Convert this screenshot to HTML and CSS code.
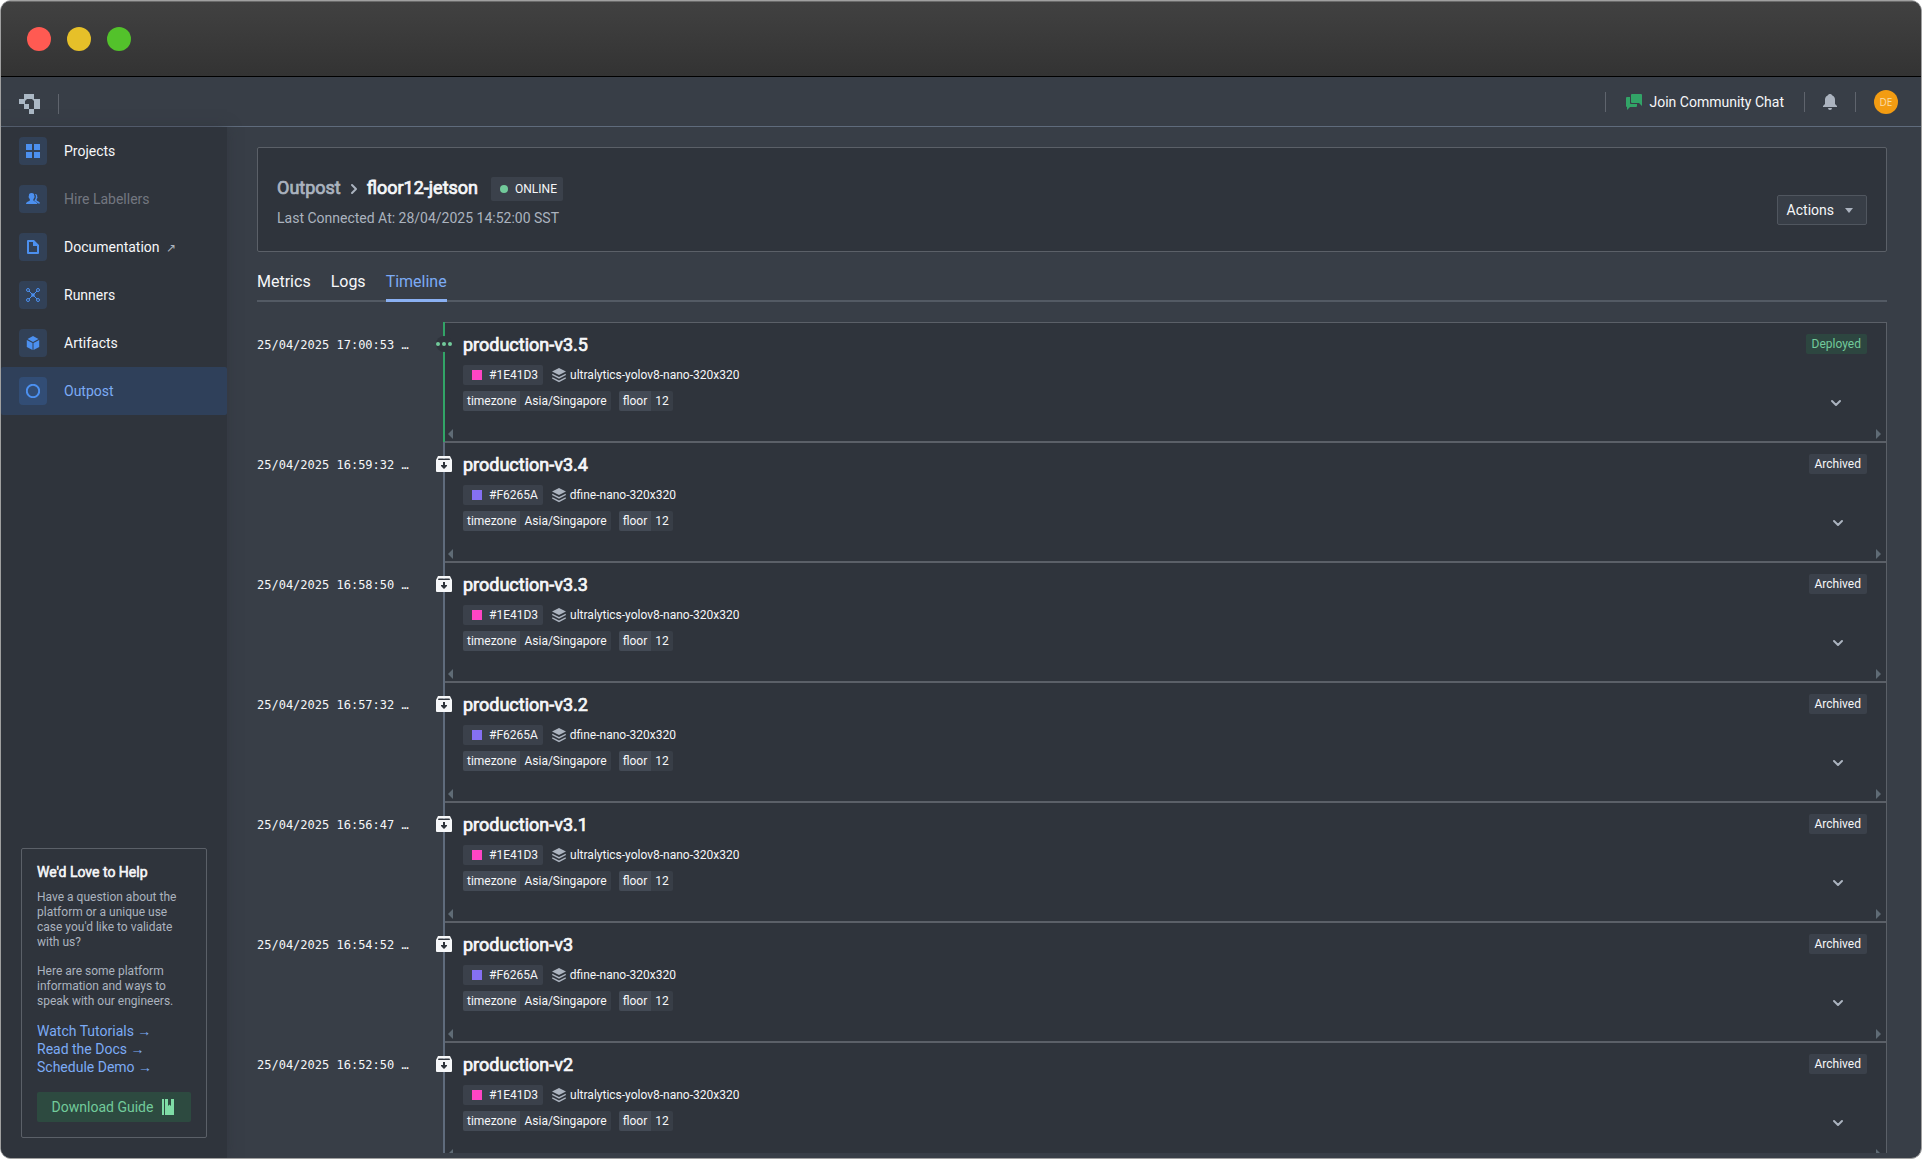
FILE: index.html
```html
<!DOCTYPE html>
<html lang="en">

   <head>
      <title>floor12-jetson | Outpost</title>
      <meta charset="utf-8">
      <meta name="viewport" content="width=device-width, initial-scale=1.0">
      <link rel="stylesheet" href="styles.css">
   </head>

   <body>
      <!-- shared icons -->
      <svg class="sprite" width="0" height="0" aria-hidden="true">
         <symbol id="archive" viewBox="0 0 16 16">
            <path fill="#2f343c" d="M1 3h14v12H1z" />
            <path fill="#f6f7f9" fill-rule="evenodd" d="M2 0h12l2 4v11a1 1 0 0 1-1 1H1a1 1 0 0 1-1-1V4zM2.500 2.500 2 4h12l-.5-1.500zM7 6v3H5v1l3 3 3-3V9H9V6z" />
         </symbol>
         <symbol id="running" viewBox="0 0 16 16">
            <circle cx="8" cy="8" r="8" fill="#2f343c" />
            <g fill="#72ca9b"><circle cx="2" cy="8" r="2" /><circle cx="8" cy="8" r="2" /><circle cx="14" cy="8" r="2" /></g>
         </symbol>
         <symbol id="layers" viewBox="0 0 16 16">
            <path fill="#abb3bf" d="M8 1 15 4.500 8 8 1 4.500zM1.500 6.800 8 10l6.500-3.200.5 1.300L8 11.700 1 8.100zM1.500 10.300 8 13.500l6.500-3.200.5 1.300L8 15.200 1 11.600z" />
         </symbol>
         <symbol id="chevron" viewBox="0 0 16 16">
            <path fill="none" stroke="#abb3bf" stroke-width="2" stroke-linecap="round" stroke-linejoin="round" d="m4 6 4 4 4-4" />
         </symbol>
      </svg>

      <div class="window">
         <div class="titlebar">
            <span class="dot red"></span><span class="dot yellow"></span><span class="dot green"></span>
         </div>

         <header class="topbar">
            <div class="brand">
               <a href="#" aria-label="Home">
                  <svg width="21" height="20" viewBox="0 0 21 20" fill="#abb8c5"><path d="M5 0h10v5h6v10h-6V7l-2-2H8L6 7v3h4v5H5v-5H0V5h5zM10 15h5v5h-5z" /></svg>
               </a>
               <span class="divider"></span>
            </div>
            <div class="topbar-right">
               <span class="divider"></span>
               <a class="chat" href="#">
                  <svg width="16" height="16" viewBox="0 0 16 16" fill="#32a467"><path d="M6 0h9a1 1 0 0 1 1 1v11l-3-3H6a1 1 0 0 1-1-1V1a1 1 0 0 1 1-1z" /><path d="M1 3h3v6a1 1 0 0 0 1 1h6v2a1 1 0 0 1-1 1H4l-3 3v-3a1 1 0 0 1-1-1V4a1 1 0 0 1 1-1z" /></svg>
                  Join Community Chat
               </a>
               <span class="divider"></span>
               <button class="bell" aria-label="Notifications">
                  <svg width="14" height="16" viewBox="1 0 14 16" fill="#abb3bf"><path d="M8 0a2 2 0 0 1 2 1.300A5 5 0 0 1 13 6v4l2 2v1H1v-1l2-2V6a5 5 0 0 1 3-4.700A2 2 0 0 1 8 0zM6 14h4a2 2 0 0 1-4 0z" /></svg>
               </button>
               <span class="divider"></span>
               <span class="avatar">DE</span>
            </div>
         </header>

         <div class="layout">
            <aside class="sidebar">
               <nav>
                  <a class="nav-item" href="#">
                     <span class="nav-icon"><svg width="14" height="14" viewBox="0 0 14 14"><path d="M0 0h6v6H0zM8 0h6v6H8zM0 8h6v6H0zM8 8h6v6H8z" /></svg></span>
                     Projects
                  </a>
                  <a class="nav-item disabled" href="#">
                     <span class="nav-icon"><svg width="14" height="14" viewBox="0 0 14 14"><path d="M8.800 2c1.800-.3 2.600.8 2.400 2.600l.3.900c-.1.800-.6 1-.9 1.900-.2 1 .4 1.400 1.400 1.800 1.300.5 1.900 1.100 2 2.300h-2.200c-.5-1.200-1.600-1.700-2.700-2.200-.6-.3-.9-.6-.5-1.200.7-.9 1-1.500 1.100-2.400.4-1.200.2-2.800-.9-3.700z" /><path d="M5.600 1c2 0 2.900 1.200 2.700 3 .5.600.4 1.500-.2 2-.2.700-.5 1.100-.8 1.500-.2 1 .3 1.400 1.300 1.800 1.600.6 2.400 1.200 2.600 2.700H0c.2-1.500 1-2.100 2.600-2.700 1-.4 1.500-.8 1.300-1.800-.3-.4-.6-.8-.8-1.500-.6-.5-.7-1.400-.2-2C2.700 2.200 3.600 1 5.600 1z" /></svg></span>
                     Hire Labellers
                  </a>
                  <a class="nav-item" href="#">
                     <span class="nav-icon"><svg width="14" height="14" viewBox="0 0 14 14"><path fill-rule="evenodd" d="M2 0h6l5 5v8a1 1 0 0 1-1 1H2a1 1 0 0 1-1-1V1a1 1 0 0 1 1-1zM3 2v10h8V6H7V2z" /></svg></span>
                     <span>Documentation <span class="external">↗</span></span>
                  </a>
                  <a class="nav-item" href="#">
                     <span class="nav-icon"><svg width="14" height="14" viewBox="0 0 14 14"><g class="stroke"><circle cx="2" cy="2" r="1.500" /><circle cx="12" cy="2" r="1.500" /><circle cx="2" cy="12" r="1.500" /><circle cx="12" cy="12" r="1.500" /><path d="m3 3 8 8M11 3l-8 8" /></g><circle cx="7" cy="7" r="1.800" /></svg></span>
                     Runners
                  </a>
                  <a class="nav-item" href="#">
                     <span class="nav-icon"><svg width="14" height="14" viewBox="0 0 14 14"><path d="m7 0 5.500 3L7 6 1.500 3zM.8 4l5.700 3v7L.8 11zM13.200 4 7.500 7v7l5.700-3z" /></svg></span>
                     Artifacts
                  </a>
                  <a class="nav-item active" href="#">
                     <span class="nav-icon"><svg width="14" height="14" viewBox="0 0 14 14"><circle class="stroke thick" cx="7" cy="7" r="6.200" /></svg></span>
                     Outpost
                  </a>
               </nav>

               <section class="help">
                  <h2>We'd Love to Help</h2>
                  <p>Have a question about the platform or a unique use case you'd like to validate with us?</p>
                  <p>Here are some platform information and ways to speak with our engineers.</p>
                  <a class="help-link" href="#">Watch Tutorials →</a>
                  <a class="help-link" href="#">Read the Docs →</a>
                  <a class="help-link" href="#">Schedule Demo →</a>
                  <button class="guide">
                     Download Guide
                     <svg width="16" height="16" viewBox="0 0 16 16" fill="#7fdca6"><path d="M2 0h2v16H2zM5 0h3v7l1.500-1.500L11 7V0h3v16H5z" /></svg>
                  </button>
               </section>
            </aside>

            <main class="content">
               <section class="device">
                  <div>
                     <div class="crumbs">
                        <a href="#">Outpost</a>
                        <svg width="16" height="16" viewBox="0 0 16 16"><path fill="none" stroke="#abb3bf" stroke-width="2" stroke-linecap="round" stroke-linejoin="round" d="m6 4 4 4-4 4" /></svg>
                        <h1>floor12-jetson</h1>
                        <span class="status">ONLINE</span>
                     </div>
                     <p class="last-seen">Last Connected At: 28/04/2025 14:52:00 SST</p>
                  </div>
                  <button class="actions">
                     Actions
                     <svg width="16" height="16" viewBox="0 0 16 16" fill="#abb3bf"><path d="M4 6h8l-4 5z" /></svg>
                  </button>
               </section>

               <nav class="tabs">
                  <a href="#">Metrics</a>
                  <a href="#">Logs</a>
                  <a class="active" href="#">Timeline</a>
               </nav>

               <ol class="timeline">
                  <li class="entry deployed">
                     <time>25/04/2025 17:00:53 …</time>
                     <div class="rail">
                        <svg class="marker" width="16" height="16"><use href="#running" /></svg>
                        <article class="card">
                           <div class="card-body">
                              <div>
                                 <h3>production-v3.5</h3>
                                 <div class="tags">
                                    <span class="tag hash"><i class="swatch pink"></i>#1E41D3</span>
                                    <span class="model"><svg width="16" height="16"><use href="#layers" /></svg>ultralytics-yolov8-nano-320x320</span>
                                 </div>
                                 <div class="tags labels">
                                    <span class="pair"><b>timezone</b><span>Asia/Singapore</span></span>
                                    <span class="pair"><b>floor</b><span>12</span></span>
                                 </div>
                              </div>
                              <div class="side">
                                 <span class="tag state">Deployed</span>
                                 <button class="expand" aria-label="Expand"><svg width="16" height="16"><use href="#chevron" /></svg></button>
                              </div>
                           </div>
                           <div class="scroller"><i class="left"></i><i class="right"></i></div>
                        </article>
                     </div>
                  </li>
                  <li class="entry">
                     <time>25/04/2025 16:59:32 …</time>
                     <div class="rail">
                        <svg class="marker" width="16" height="16"><use href="#archive" /></svg>
                        <article class="card">
                           <div class="card-body">
                              <div>
                                 <h3>production-v3.4</h3>
                                 <div class="tags">
                                    <span class="tag hash"><i class="swatch violet"></i>#F6265A</span>
                                    <span class="model"><svg width="16" height="16"><use href="#layers" /></svg>dfine-nano-320x320</span>
                                 </div>
                                 <div class="tags labels">
                                    <span class="pair"><b>timezone</b><span>Asia/Singapore</span></span>
                                    <span class="pair"><b>floor</b><span>12</span></span>
                                 </div>
                              </div>
                              <div class="side">
                                 <span class="tag state">Archived</span>
                                 <button class="expand" aria-label="Expand"><svg width="16" height="16"><use href="#chevron" /></svg></button>
                              </div>
                           </div>
                           <div class="scroller"><i class="left"></i><i class="right"></i></div>
                        </article>
                     </div>
                  </li>
                  <li class="entry">
                     <time>25/04/2025 16:58:50 …</time>
                     <div class="rail">
                        <svg class="marker" width="16" height="16"><use href="#archive" /></svg>
                        <article class="card">
                           <div class="card-body">
                              <div>
                                 <h3>production-v3.3</h3>
                                 <div class="tags">
                                    <span class="tag hash"><i class="swatch pink"></i>#1E41D3</span>
                                    <span class="model"><svg width="16" height="16"><use href="#layers" /></svg>ultralytics-yolov8-nano-320x320</span>
                                 </div>
                                 <div class="tags labels">
                                    <span class="pair"><b>timezone</b><span>Asia/Singapore</span></span>
                                    <span class="pair"><b>floor</b><span>12</span></span>
                                 </div>
                              </div>
                              <div class="side">
                                 <span class="tag state">Archived</span>
                                 <button class="expand" aria-label="Expand"><svg width="16" height="16"><use href="#chevron" /></svg></button>
                              </div>
                           </div>
                           <div class="scroller"><i class="left"></i><i class="right"></i></div>
                        </article>
                     </div>
                  </li>
                  <li class="entry">
                     <time>25/04/2025 16:57:32 …</time>
                     <div class="rail">
                        <svg class="marker" width="16" height="16"><use href="#archive" /></svg>
                        <article class="card">
                           <div class="card-body">
                              <div>
                                 <h3>production-v3.2</h3>
                                 <div class="tags">
                                    <span class="tag hash"><i class="swatch violet"></i>#F6265A</span>
                                    <span class="model"><svg width="16" height="16"><use href="#layers" /></svg>dfine-nano-320x320</span>
                                 </div>
                                 <div class="tags labels">
                                    <span class="pair"><b>timezone</b><span>Asia/Singapore</span></span>
                                    <span class="pair"><b>floor</b><span>12</span></span>
                                 </div>
                              </div>
                              <div class="side">
                                 <span class="tag state">Archived</span>
                                 <button class="expand" aria-label="Expand"><svg width="16" height="16"><use href="#chevron" /></svg></button>
                              </div>
                           </div>
                           <div class="scroller"><i class="left"></i><i class="right"></i></div>
                        </article>
                     </div>
                  </li>
                  <li class="entry">
                     <time>25/04/2025 16:56:47 …</time>
                     <div class="rail">
                        <svg class="marker" width="16" height="16"><use href="#archive" /></svg>
                        <article class="card">
                           <div class="card-body">
                              <div>
                                 <h3>production-v3.1</h3>
                                 <div class="tags">
                                    <span class="tag hash"><i class="swatch pink"></i>#1E41D3</span>
                                    <span class="model"><svg width="16" height="16"><use href="#layers" /></svg>ultralytics-yolov8-nano-320x320</span>
                                 </div>
                                 <div class="tags labels">
                                    <span class="pair"><b>timezone</b><span>Asia/Singapore</span></span>
                                    <span class="pair"><b>floor</b><span>12</span></span>
                                 </div>
                              </div>
                              <div class="side">
                                 <span class="tag state">Archived</span>
                                 <button class="expand" aria-label="Expand"><svg width="16" height="16"><use href="#chevron" /></svg></button>
                              </div>
                           </div>
                           <div class="scroller"><i class="left"></i><i class="right"></i></div>
                        </article>
                     </div>
                  </li>
                  <li class="entry">
                     <time>25/04/2025 16:54:52 …</time>
                     <div class="rail">
                        <svg class="marker" width="16" height="16"><use href="#archive" /></svg>
                        <article class="card">
                           <div class="card-body">
                              <div>
                                 <h3>production-v3</h3>
                                 <div class="tags">
                                    <span class="tag hash"><i class="swatch violet"></i>#F6265A</span>
                                    <span class="model"><svg width="16" height="16"><use href="#layers" /></svg>dfine-nano-320x320</span>
                                 </div>
                                 <div class="tags labels">
                                    <span class="pair"><b>timezone</b><span>Asia/Singapore</span></span>
                                    <span class="pair"><b>floor</b><span>12</span></span>
                                 </div>
                              </div>
                              <div class="side">
                                 <span class="tag state">Archived</span>
                                 <button class="expand" aria-label="Expand"><svg width="16" height="16"><use href="#chevron" /></svg></button>
                              </div>
                           </div>
                           <div class="scroller"><i class="left"></i><i class="right"></i></div>
                        </article>
                     </div>
                  </li>
                  <li class="entry">
                     <time>25/04/2025 16:52:50 …</time>
                     <div class="rail">
                        <svg class="marker" width="16" height="16"><use href="#archive" /></svg>
                        <article class="card">
                           <div class="card-body">
                              <div>
                                 <h3>production-v2</h3>
                                 <div class="tags">
                                    <span class="tag hash"><i class="swatch pink"></i>#1E41D3</span>
                                    <span class="model"><svg width="16" height="16"><use href="#layers" /></svg>ultralytics-yolov8-nano-320x320</span>
                                 </div>
                                 <div class="tags labels">
                                    <span class="pair"><b>timezone</b><span>Asia/Singapore</span></span>
                                    <span class="pair"><b>floor</b><span>12</span></span>
                                 </div>
                              </div>
                              <div class="side">
                                 <span class="tag state">Archived</span>
                                 <button class="expand" aria-label="Expand"><svg width="16" height="16"><use href="#chevron" /></svg></button>
                              </div>
                           </div>
                           <div class="scroller"><i class="left"></i><i class="right"></i></div>
                        </article>
                     </div>
                  </li>
               </ol>
            </main>
         </div>
      </div>
   </body>

</html>
```
FILE: styles.css
```css
* {
   box-sizing: border-box;
}

body {
   margin: 0;
   background-color: #ffffff;
   color: #f6f7f9;
   font-family: Roboto, sans-serif;
   font-size: 14px;
   line-height: 18px;
}

h1,
h2,
h3,
p,
ol {
   margin: 0;
   padding: 0;
}

/* headings are the regular face thickened with a stroke */
h1,
h2,
h3,
.crumbs a {
   font-weight: 400;
   -webkit-text-stroke: 0.04em currentColor;
}

a {
   color: inherit;
   text-decoration: none;
}

button {
   font: inherit;
   color: inherit;
   border: none;
   background: none;
   padding: 0;
   cursor: pointer;
}

svg {
   display: block;
   flex: none;
}

.sprite {
   position: absolute;
}

/* window frame */
.window {
   height: 100vh;
   display: flex;
   flex-direction: column;
   border: 1px solid #a0a0a0;
   border-radius: 11px;
   overflow: hidden;
   background-color: #383e47;
}

.titlebar {
   flex: none;
   height: 76px;
   display: flex;
   align-items: center;
   gap: 16px;
   padding: 0 26px;
   border-top: 1px solid #6a6a6a;
   border-bottom: 1px solid #000000;
   background: linear-gradient(#414141, #333333);
}

.dot {
   width: 24px;
   height: 24px;
   border-radius: 50%;
}

.red {
   background-color: #ff5a52;
}

.yellow {
   background-color: #e6c029;
}

.green {
   background-color: #53c22b;
}

/* top bar */
.topbar {
   flex: none;
   height: 50px;
   display: flex;
   align-items: center;
   padding: 0 23px 0 18px;
   border-bottom: 1px solid #5f6b7c;
}

.brand {
   display: flex;
   gap: 18px;
   padding-top: 4px;
}

.divider {
   width: 1px;
   height: 20px;
   background-color: #5f646d;
}

.topbar-right {
   margin-left: auto;
   display: flex;
   align-items: center;
   gap: 18px;
}

.chat {
   display: flex;
   align-items: center;
   gap: 7px;
   padding: 0 2px;
}

.avatar {
   width: 24px;
   height: 24px;
   border-radius: 50%;
   background-color: #f39c12;
   color: #fbdca8;
   font-family: "Open Sans", sans-serif;
   font-size: 10px;
   line-height: 24px;
   text-align: center;
}

.layout {
   flex: 1;
   min-height: 0;
   display: flex;
}

/* sidebar */
.sidebar {
   flex: none;
   width: 226px;
   display: flex;
   flex-direction: column;
   justify-content: space-between;
   background-color: #2f343c;
   box-shadow: 0 0 12px rgba(47, 52, 60, 0.6);
   padding-bottom: 20px;
}

.nav-item {
   height: 48px;
   display: flex;
   align-items: center;
   gap: 17px;
   padding-left: 18px;
   border-radius: 2px;
}

.nav-icon {
   width: 28px;
   height: 28px;
   display: flex;
   align-items: center;
   justify-content: center;
   border-radius: 4px;
   background-color: #324157;
   fill: #4c90f0;
}

.stroke {
   fill: none;
   stroke: #4c90f0;
}

.thick {
   stroke-width: 2px;
}

.nav-item.disabled {
   color: #737780;
}

.nav-item.active {
   background-color: #2f405a;
   color: #7cabf5;
}

.nav-item.active .nav-icon {
   background-color: #324d75;
}

.external {
   margin-left: 3px;
   font-size: 12px;
   color: #abb3bf;
}

.help {
   margin: 0 20px;
   padding: 14px 15px 15px;
   border: 1px solid #5b6068;
   border-radius: 2px;
}

.help h2 {
   font-size: 14px;
   margin-bottom: 9px;
}

.help p {
   font-size: 12px;
   line-height: 15px;
   color: #abb3bf;
   margin-bottom: 14px;
}

.help p + p {
   margin-bottom: 13px;
}

.help-link {
   display: block;
   height: 18px;
   color: #7cabf5;
}

.guide {
   width: 100%;
   height: 30px;
   display: flex;
   align-items: center;
   justify-content: center;
   gap: 7px;
   margin-top: 16px;
   border-radius: 2px;
   background-color: #2d4a40;
   color: #72ca9b;
}

/* main column */
.content {
   flex: 1;
   min-width: 0;
   display: flex;
   flex-direction: column;
   padding: 20px 34px 5px 30px;
}

.device {
   flex: none;
   display: flex;
   align-items: flex-end;
   justify-content: space-between;
   padding: 29px 19px 25px;
   border: 1px solid #5b6068;
   border-radius: 2px;
   background-color: #2f343c;
}

.crumbs {
   height: 24px;
   display: flex;
   align-items: center;
   gap: 5px;
   margin-bottom: 9px;
   font-size: 18px;
   color: #abb3bf;
}

.crumbs h1 {
   font-size: 18px;
   color: #f6f7f9;
}

.crumbs a,
.crumbs h1 {
   padding-bottom: 2px;
}

.status {
   display: flex;
   align-items: center;
   gap: 7px;
   height: 24px;
   margin-left: 8px;
   padding: 0 6px 0 9px;
   border-radius: 2px;
   background-color: #3b414b;
   color: #f6f7f9;
   font-size: 12px;
}

.status::before {
   content: "";
   width: 8px;
   height: 8px;
   border-radius: 50%;
   background-color: #72ca9b;
}

.last-seen {
   line-height: 16px;
   color: #abb3bf;
}

.actions {
   height: 30px;
   display: flex;
   align-items: center;
   gap: 7px;
   margin-bottom: 1px;
   padding: 0 9px;
   border: 1px solid #50565f;
   border-radius: 2px;
   background-color: #383e47;
}

.tabs {
   flex: none;
   display: flex;
   gap: 20px;
   height: 50px;
   border-bottom: 2px solid #535a64;
   font-size: 16px;
}

.tabs a {
   height: 50px;
   padding-top: 21px;
}

.tabs .active {
   color: #7cabf5;
   border-bottom: 3px solid #8ab0f2;
}

/* timeline */
.timeline {
   flex: 1;
   min-height: 0;
   overflow: hidden;
   list-style: none;
   margin-top: 20px;
}

.entry {
   height: 120px;
   display: flex;
}

.entry time {
   flex: none;
   width: 186px;
   padding-top: 14px;
   font-family: "DejaVu Sans Mono", monospace;
   font-size: 12px;
}

.rail {
   position: relative;
   flex: 1;
   display: flex;
   border-left: 2px solid #5f6b7c;
}

.deployed .rail {
   border-left-color: #32a467;
}

/* sits on the rail line */
.marker {
   position: absolute;
   left: -9px;
   top: 14px;
}

.card {
   flex: 1;
   display: flex;
   flex-direction: column;
   border: 1px solid #5b6068;
   border-left: none;
   background-color: #2f343c;
}

.card-body {
   flex: 1;
   display: flex;
   justify-content: space-between;
   padding: 11px 19px 0 18px;
}

.card h3 {
   font-size: 18px;
   line-height: 22px;
   margin-bottom: 9px;
}

.tags {
   display: flex;
   align-items: center;
   gap: 8px;
   height: 20px;
   font-size: 12px;
}

.labels {
   margin-top: 6px;
}

.tag,
.pair {
   height: 20px;
   border-radius: 2px;
   background-color: #3b414b;
   font-size: 12px;
   line-height: 20px;
}

.hash {
   display: flex;
   align-items: center;
   gap: 7px;
   padding: 0 5px 0 9px;
}

.swatch {
   width: 10px;
   height: 10px;
}

.pink {
   background-color: #ff45c4;
}

.violet {
   background-color: #8570f5;
}

.model {
   display: flex;
   align-items: center;
   gap: 3px;
}

.pair {
   display: flex;
   overflow: hidden;
   background-color: #383e47;
}

.pair b {
   font-weight: 400;
   background-color: #434a55;
}

.pair b,
.pair span {
   padding: 0 4px;
}

.side {
   display: flex;
   flex-direction: column;
   align-items: center;
   gap: 41px;
}

.state {
   padding: 0 6px;
}

.deployed .state {
   background-color: #2d4640;
   color: #72ca9b;
}

.scroller {
   display: flex;
   justify-content: space-between;
   padding: 0 5px 2px 3px;
}

.scroller i {
   border: 5px solid transparent;
}

.scroller .left {
   border-left: none;
   border-right-color: #5f6b75;
}

.scroller .right {
   border-right: none;
   border-left-color: #5f6b75;
}
```
